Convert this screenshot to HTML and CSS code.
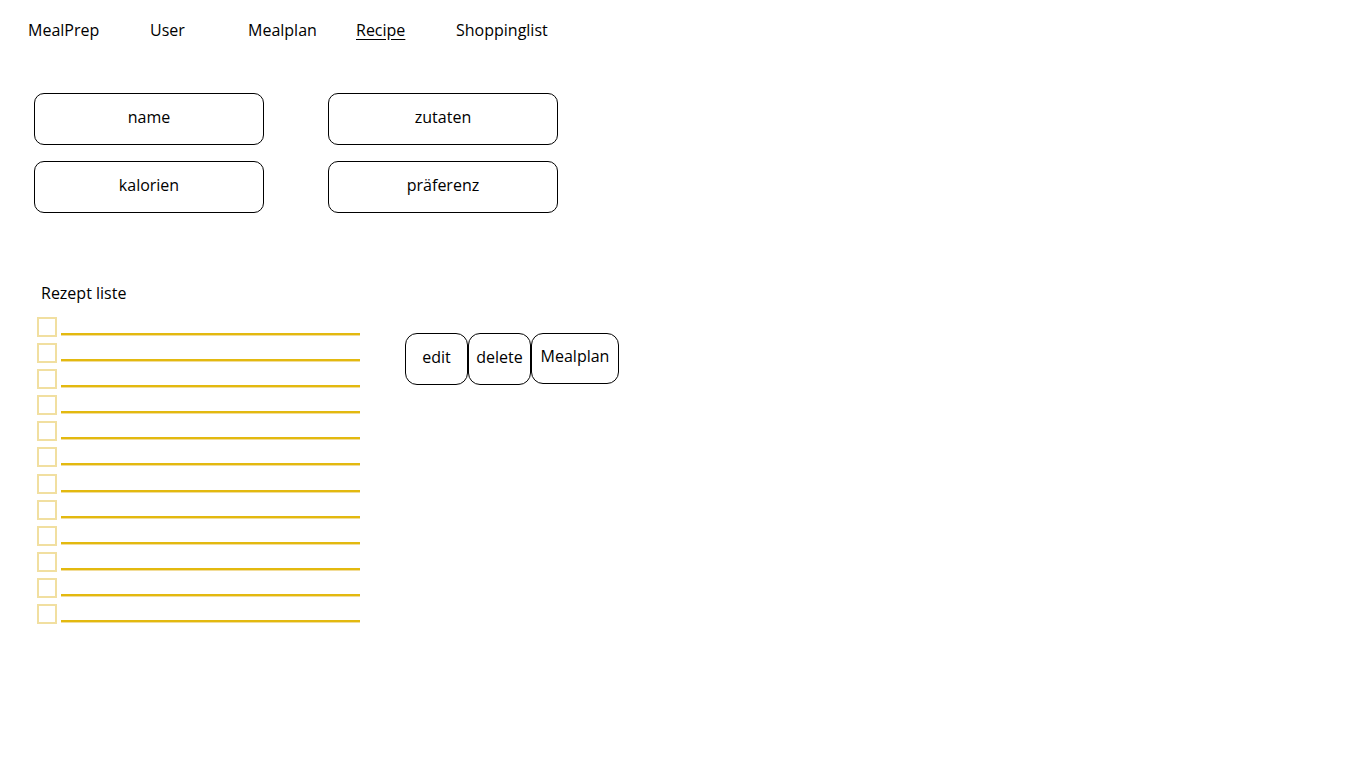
FILE: index.html
```html
<!DOCTYPE html>
<html lang="de">
<head>
<meta charset="utf-8">
<title>MealPrep - Recipe</title>
<link rel="stylesheet" href="styles.css">
</head>
<body>
<nav class="nav">
  <a class="nav-item">MealPrep</a>
  <a class="nav-item">User</a>
  <a class="nav-item">Mealplan</a>
  <a class="nav-item active">Recipe</a>
  <a class="nav-item">Shoppinglist</a>
</nav>
<section class="form">
  <div class="field">name</div>
  <div class="field">zutaten</div>
  <div class="field">kalorien</div>
  <div class="field">präferenz</div>
</section>
<section class="recipes">
  <h2 class="list-title">Rezept liste</h2>
  <div class="list-area">
    <ul class="list">
      <li class="row"><span class="check"></span><span class="line"></span></li>
      <li class="row"><span class="check"></span><span class="line"></span></li>
      <li class="row"><span class="check"></span><span class="line"></span></li>
      <li class="row"><span class="check"></span><span class="line"></span></li>
      <li class="row"><span class="check"></span><span class="line"></span></li>
      <li class="row"><span class="check"></span><span class="line"></span></li>
      <li class="row"><span class="check"></span><span class="line"></span></li>
      <li class="row"><span class="check"></span><span class="line"></span></li>
      <li class="row"><span class="check"></span><span class="line"></span></li>
      <li class="row"><span class="check"></span><span class="line"></span></li>
      <li class="row"><span class="check"></span><span class="line"></span></li>
      <li class="row"><span class="check"></span><span class="line"></span></li>
    </ul>
    <div class="actions">
      <button class="btn btn-edit">edit</button>
      <button class="btn btn-delete">delete</button>
      <button class="btn btn-plan">Mealplan</button>
    </div>
  </div>
</section>
</body>
</html>
```
FILE: styles.css
```css
* { box-sizing: border-box; }
html, body {
  margin: 0;
  padding: 0;
  background: #ffffff;
  color: #000000;
  font-family: "Open Sans", "Noto Sans", sans-serif;
  font-weight: 500;
}
.nav {
  display: grid;
  grid-template-columns: 122px 98px 108px 100px auto;
  padding: 18px 0 0 28px;
  height: 93px;
}
.nav-item {
  font-size: 16px;
  line-height: 24px;
  height: 24px;
  color: #000;
  text-decoration: none;
}
.nav-item.active {
  text-decoration: underline;
  text-underline-offset: 3px;
}
.form {
  display: grid;
  grid-template-columns: 230px 230px;
  column-gap: 64px;
  row-gap: 16px;
  margin-left: 34px;
}
.field {
  height: 52px;
  border: 1px solid #000;
  border-radius: 10px;
  display: flex;
  align-items: center;
  justify-content: center;
  font-size: 16px;
  padding-bottom: 4px;
}
.recipes {
  margin-top: 69px;
}
.list-title {
  margin: 0 0 13px 41px;
  font-size: 16px;
  font-weight: 500;
  line-height: 22px;
  height: 22px;
}
.list-area {
  display: flex;
  align-items: flex-start;
  margin-left: 37px;
}
.list {
  list-style: none;
  margin: 0;
  padding: 0;
}
.row {
  display: flex;
  height: 26.1px;
  align-items: flex-start;
}
.check {
  width: 20px;
  height: 20px;
  border: 2px solid #f1dfa0;
}
.line {
  width: 299px;
  height: 2px;
  margin: 16px 0 0 4px;
  background: #e3b90f;
  box-shadow: 0 1px 0 #f2dd9a;
}
.actions {
  display: flex;
  margin: 16px 0 0 45px;
}
.btn {
  font-family: inherit;
  font-weight: 500;
  font-size: 16px;
  color: #000;
  background: #fff;
  border: 1px solid #000;
  border-radius: 12px;
  height: 52px;
  padding: 0 0 4px 0;
  cursor: pointer;
}
.btn-edit { width: 63px; }
.btn-delete { width: 63px; }
.btn-plan { width: 88px; height: 51px; padding-bottom: 6px; }
```
